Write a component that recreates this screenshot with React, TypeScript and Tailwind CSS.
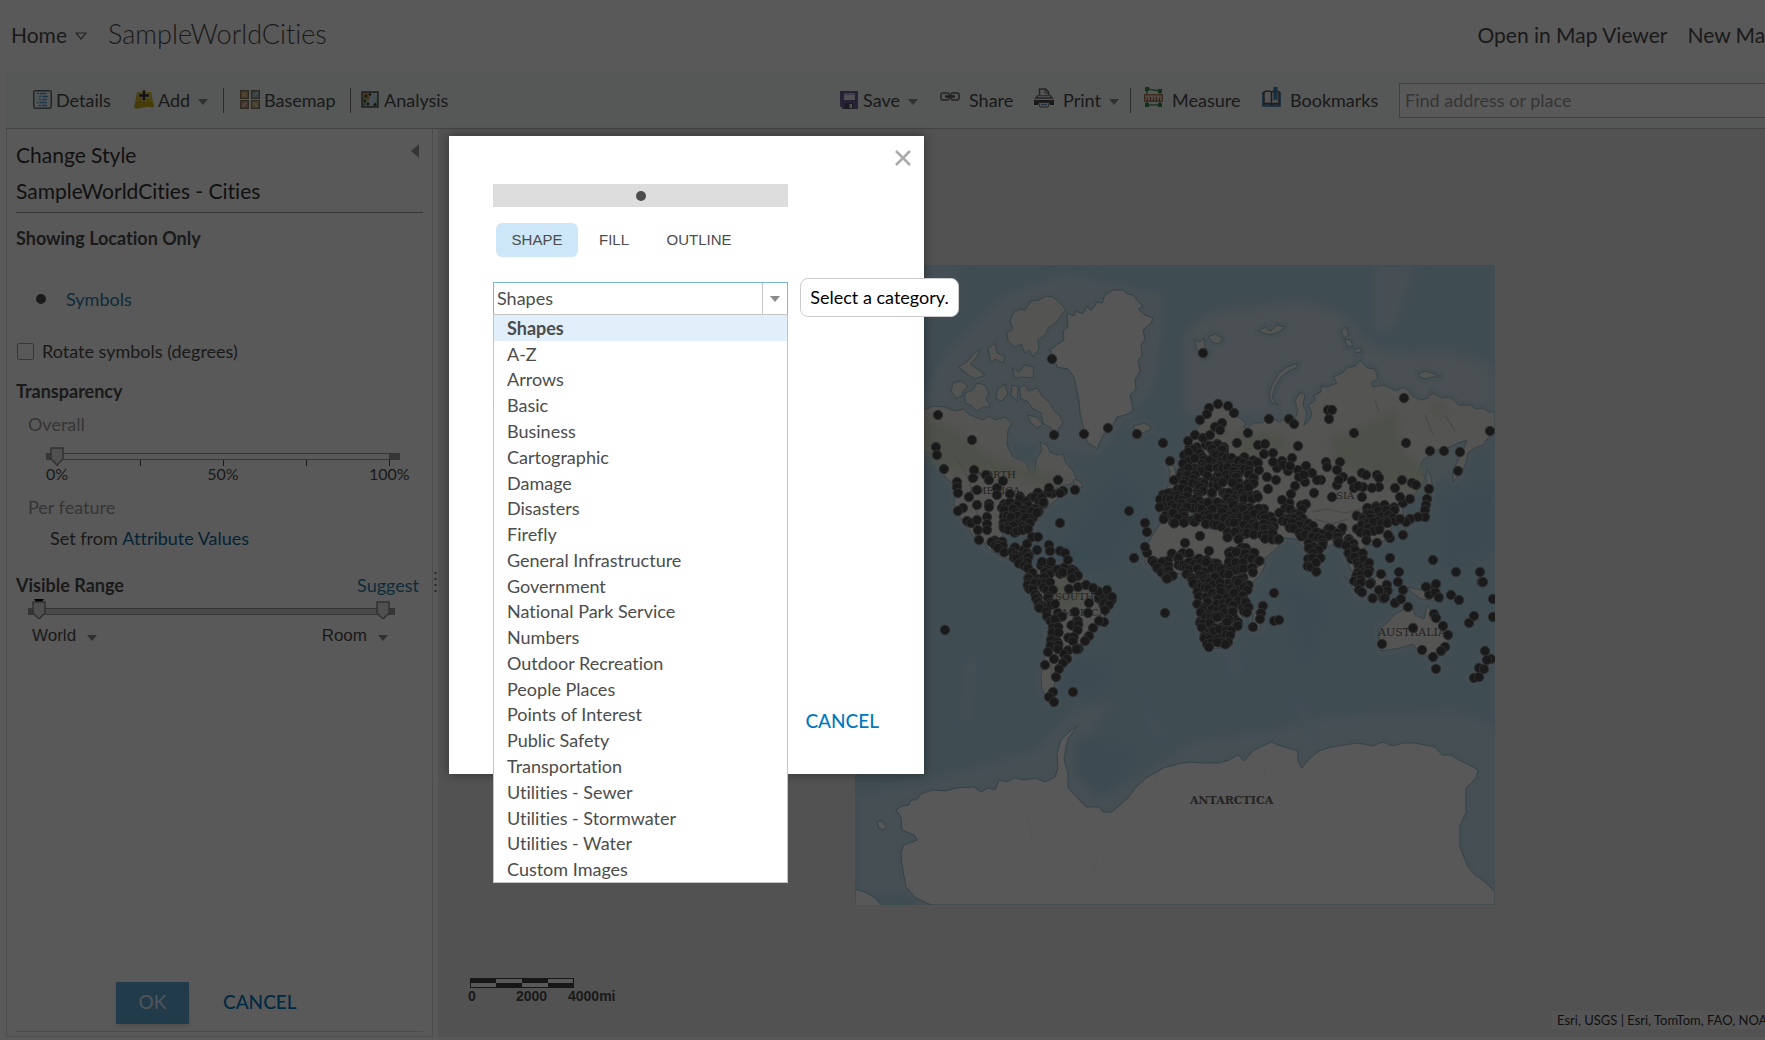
import React from 'react';

type Point = [number, number];

const categories = [
  'Shapes', 'A-Z', 'Arrows', 'Basic', 'Business', 'Cartographic', 'Damage', 'Disasters',
  'Firefly', 'General Infrastructure', 'Government', 'National Park Service', 'Numbers',
  'Outdoor Recreation', 'People Places', 'Points of Interest', 'Public Safety',
  'Transportation', 'Utilities - Sewer', 'Utilities - Stormwater', 'Utilities - Water',
  'Custom Images'
];

// coastlines on the 640 x 640 mercator canvas
const land = {
  northAmerica: '50,145 69,145 78,141 90,142 100,146 108,144 115,150 128,155 134,151 140,155 150,152 157,158 153,165 152,180 158,192 170,197 176,209 180,209 181,195 187,185 185,177 192,180 195,187 202,190 208,189 211,198 218,206 222,214 215,219 203,221 200,224 208,224 213,228 203,233 195,240 188,246 185,253 177,261 178,274 174,268 168,262 160,264 148,266 147,280 154,286 165,281 162,290 172,293 172,303 182,305 180,308 168,303 160,296 148,292 133,284 126,272 118,262 122,276 114,265 112,262 105,252 99,240 100,220 90,212 85,200 78,190 69,186 50,182',
  southAmerica: '182,304 190,298 200,301 212,302 222,309 230,317 232,322 245,325 258,330 257,338 250,345 249,355 246,361 235,366 229,377 217,386 215,393 209,397 205,405 201,413 198,425 200,437 193,434 187,425 186,412 188,400 192,375 195,353 184,340 178,327 177,320 181,312',
  greenland: '195,85 203,79 209,75 208,66 213,62 212,48 219,51 221,46 228,49 232,41 236,46 242,37 247,38 250,30 258,25 268,25 272,29 278,30 288,42 283,44 290,50 298,53 296,58 288,65 290,74 286,80 287,90 283,96 285,106 280,115 281,124 275,130 277,138 278,146 270,150 262,152 258,160 253,165 248,170 245,177 242,184 237,180 233,178 230,170 228,160 225,148 224,135 221,122 219,112 213,104 202,102 199,93',
  ellesmere: '158,48 165,44 170,45 176,36 184,35 191,31 198,32 205,38 211,45 206,50 201,58 194,62 190,70 183,75 184,84 178,92 174,85 170,88 166,79 160,82 153,76 152,68 158,64 155,56',
  devon: '157,103 164,107 170,100 178,102 179,113 168,112 160,113',
  baffin: '164,122 170,120 173,126 182,123 187,131 195,138 199,146 205,151 208,158 204,163 203,169 196,163 188,158 186,148 178,144 172,136 166,134',
  victoria: '110,128 118,125 122,118 130,120 134,128 131,134 136,142 128,142 122,146 116,140 110,138',
  banks: '98,118 106,116 113,121 108,126 107,131 101,133 96,126',
  melville: '104,102 112,97 118,89 126,84 121,93 115,99 122,104 130,110 120,114 112,109',
  bathurst: '133,84 140,78 142,88 150,92 148,98 140,94 136,98',
  prince: '142,125 150,119 153,129 147,136 141,134',
  somerset: '157,120 163,122 162,136 156,130',
  southampton: '172,150 182,152 188,160 182,163 176,158',
  iceland: '278,161 283,160 288,158 294,160 296,164 288,168 281,167',
  newfoundland: '219,214 226,217 228,223 219,221',
  eurasia: '304,235 304,250 310,253 318,250 321,243 335,237 345,245 351,251 353,245 345,233 358,245 361,254 364,240 372,240 367,252 380,255 381,266 390,282 396,297 412,292 425,280 418,273 408,270 405,263 420,272 440,274 449,283 457,305 462,297 463,290 476,280 484,280 490,290 495,303 503,317 500,305 498,297 506,302 513,297 506,285 512,280 525,279 537,268 535,257 530,247 537,243 543,253 549,253 547,241 557,232 566,222 570,212 562,208 568,195 582,185 595,182 603,178 612,175 608,186 603,195 598,207 598,217 605,208 611,198 613,188 620,183 628,180 633,173 640,168 640,147 634,147 628,143 621,144 615,140 604,140 595,132 586,133 578,128 573,133 565,135 557,131 553,125 548,122 541,126 535,123 529,120 518,122 516,118 523,113 520,104 513,103 505,95 500,101 492,103 487,108 478,112 482,118 472,122 466,121 466,127 459,130 460,136 453,140 457,148 455,154 449,161 452,148 448,140 450,130 445,127 440,136 443,146 440,154 433,152 424,157 415,152 407,158 398,158 392,163 388,162 391,158 378,148 365,138 355,142 348,155 342,165 330,178 332,192 338,190 340,200 330,208 320,215 312,222 318,228 317,234',
  britain: '314,218 322,215 320,205 316,192 311,198 315,206',
  novaya: '443,98 437,100 430,103 423,109 418,118 414,128 416,137 423,140 417,133 420,122 426,112 434,106 441,103',
  svalbard: '340,75 345,77 349,73 350,82 354,86 350,95 345,89 341,82',
  svalbardEast: '353,72 360,69 368,73 364,79 357,77',
  franzJosef: '403,66 410,62 416,66 422,60 430,62 424,67 414,70',
  severnaya: '486,66 491,62 494,70 489,73',
  severnayaSouth: '490,74 496,75 498,82 492,81',
  bolshevik: '499,84 505,83 507,87 501,88',
  siberian: '563,109 570,106 577,108 586,112 577,112 570,114 565,112',
  africa: '309,255 338,249 340,258 355,264 375,263 381,265 387,285 397,300 411,299 405,310 392,323 392,347 382,357 380,370 367,383 353,384 346,370 343,350 342,330 336,317 337,312 325,308 305,312 290,298 290,283 302,263',
  madagascar: '407,342 405,365 398,366 398,350',
  australia: '594,369 592,384 580,395 572,391 562,384 558,379 545,383 526,386 524,375 523,364 532,358 540,349 551,343 558,344 560,350 569,354 572,340 576,345 580,355 589,361',
  tasmania: '577,401 584,401 581,407',
  newGuinea: '553,322 565,325 580,328 588,338 578,335 566,334 556,327',
  borneo: '514,318 525,308 532,310 525,326 516,325',
  sumatra: '489,311 498,317 508,331 502,329',
  newZealand: '628,383 640,392 632,400 620,416 614,414 626,401 632,396',
  japan: '550,264 552,255 562,251 568,243 570,233 577,226 574,238 570,250 560,257',
  sakhalin: '572,204 576,212 578,225 573,224 571,214'
};

const antarctica = '41,545 47,541 54,540 56,535 61,535 66,529 78,525 90,526 102,523 119,522 126,527 133,523 140,525 144,515 152,517 160,513 169,515 180,513 190,517 200,512 203,503 202,488 206,475 214,467 223,460 213,474 211,482 209,495 213,508 213,523 231,542 244,542 248,547 257,547 273,533 281,522 291,513 302,507 308,503 327,498 336,497 350,498 364,498 374,495 383,490 389,496 399,485 408,481 416,477 426,481 443,486 443,497 447,503 455,493 464,486 476,482 490,480 501,478 509,479 517,481 528,477 538,481 548,478 559,478 570,480 580,482 587,490 596,490 604,495 614,500 623,505 621,513 611,523 611,548 605,560 605,582 609,592 613,602 620,610 630,617 640,627 640,640 76,640 61,633 51,622 47,600 46,588 49,580 62,575 59,570 47,565 46,552';

const cityGroups: Point[][] = [
  // eastern United States
  [[147, 240], [157, 232], [175, 230], [192, 224], [202, 226], [190, 240], [184, 252], [176, 258], [178, 269], [146, 267]],
  // Mexico and Central America
  [[135, 272], [148, 270], [155, 282], [165, 280], [174, 290], [176, 305], [160, 297], [148, 292], [136, 285]],
  // northern Andes and the Caribbean coast
  [[172, 303], [188, 296], [215, 300], [228, 310], [216, 314], [203, 310], [192, 322], [184, 328], [172, 327]],
  [[174, 318], [195, 312], [198, 325], [200, 338], [208, 350], [205, 385], [193, 385], [193, 352], [182, 344], [174, 332]],
  [[215, 355], [224, 355], [224, 385], [212, 387]],
  [[237, 322], [258, 328], [256, 342], [249, 346]],
  // Europe, Near East
  [[304, 232], [318, 215], [325, 208], [330, 184], [345, 180], [375, 178], [380, 192], [395, 190], [407, 198], [402, 215], [398, 222], [406, 237], [414, 250], [424, 262], [425, 276], [408, 274], [392, 268], [383, 277], [372, 275], [368, 262], [356, 262], [342, 258], [317, 262], [303, 255]],
  // Iran, Pakistan, India
  [[422, 246], [440, 234], [457, 230], [452, 246], [457, 260], [470, 264], [480, 258], [492, 266], [506, 280], [514, 292], [517, 304], [510, 312], [504, 322], [497, 318], [500, 300], [489, 284], [475, 275], [467, 285], [466, 308], [458, 308], [450, 300], [452, 285], [446, 272], [430, 262]],
  // eastern China, Korea
  [[500, 252], [515, 240], [530, 240], [544, 243], [540, 262], [527, 266], [510, 278], [500, 262]],
  // Africa
  [[291, 286], [305, 292], [320, 286], [335, 288], [350, 293], [370, 292], [383, 276], [392, 281], [406, 293], [404, 305], [396, 320], [394, 345], [384, 358], [378, 372], [368, 385], [360, 377], [352, 384], [345, 362], [342, 345], [341, 325], [330, 316], [312, 314], [300, 306]],
  // Indonesia
  [[490, 312], [498, 316], [510, 331], [526, 331], [528, 318], [534, 320], [533, 335], [505, 333]],
  [[568, 322], [588, 325], [588, 338], [576, 338]]
];

const cities: Point[] = [
  [83, 150], [81, 182], [82, 190], [89, 204], [117, 175], [119, 205], [118, 213], [131, 210], [134, 215], [148, 216],
  [102, 217], [102, 222], [103, 228], [114, 232], [122, 225], [122, 240], [108, 243], [103, 246], [134, 239], [134, 242],
  [142, 223], [142, 230], [155, 229], [112, 256], [116, 258], [122, 255], [123, 265], [124, 275], [132, 252], [132, 259],
  [132, 265], [197, 94], [199, 170], [229, 169], [253, 163], [282, 169], [308, 178], [315, 196], [203, 215], [194, 223],
  [220, 225], [208, 226], [205, 228], [205, 258], [274, 246], [290, 258], [292, 267], [290, 282], [279, 293], [177, 272],
  [183, 272], [172, 279], [182, 285], [194, 280], [195, 286], [205, 286], [210, 288], [213, 295], [196, 297], [187, 297],
  [348, 88], [363, 139], [354, 143], [352, 149], [345, 155], [373, 141], [379, 148], [367, 158], [360, 162], [365, 165],
  [393, 168], [382, 178], [414, 154], [434, 154], [439, 159], [473, 145], [477, 145], [474, 154], [499, 168], [443, 181],
  [403, 180], [410, 179], [409, 189], [418, 188], [549, 133], [551, 178], [575, 186], [589, 186], [605, 187], [603, 206],
  [635, 166], [340, 170], [333, 176], [348, 173], [355, 170], [437, 193], [451, 201], [457, 208], [471, 197], [485, 197],
  [472, 202], [482, 205], [488, 212], [466, 215], [462, 215], [450, 217], [440, 221], [436, 229], [482, 220], [484, 215],
  [497, 216], [507, 208], [511, 210], [522, 210], [524, 213], [524, 222], [517, 223], [499, 223], [507, 232], [508, 222],
  [503, 221], [547, 215], [540, 223], [557, 218], [561, 220], [574, 224], [572, 234], [571, 240], [570, 245], [570, 252],
  [563, 252], [555, 254], [551, 257], [545, 254], [477, 232], [459, 228], [548, 238], [555, 234], [545, 232], [548, 270],
  [535, 273], [533, 270], [522, 278], [535, 293], [578, 295], [601, 307], [625, 307], [627, 317], [544, 307], [543, 317],
  [526, 309], [516, 318], [330, 278], [345, 271], [354, 286], [413, 224], [421, 215], [412, 212], [422, 203], [427, 196],
  [433, 206], [443, 205], [418, 197], [444, 212], [449, 210], [428, 200], [435, 201], [427, 235], [419, 328], [408, 341],
  [406, 348], [405, 354], [398, 362], [419, 356], [424, 355], [310, 348], [90, 365], [244, 327], [252, 325], [257, 332],
  [254, 340], [250, 345], [234, 338], [233, 348], [220, 347], [249, 357], [244, 356], [238, 363], [234, 371], [230, 376],
  [209, 389], [212, 394], [208, 398], [204, 404], [201, 412], [198, 427], [194, 432], [199, 437], [218, 427], [193, 387],
  [199, 394], [190, 400], [214, 324], [223, 322], [231, 320], [238, 323], [540, 338], [546, 334], [548, 325], [553, 342],
  [515, 319], [524, 325], [596, 330], [604, 335], [628, 317], [638, 334], [619, 351], [614, 358], [638, 352], [579, 349],
  [581, 353], [588, 361], [593, 370], [590, 382], [586, 386], [578, 392], [581, 404], [567, 385], [527, 379], [558, 363],
  [630, 386], [636, 394], [632, 395], [624, 403], [629, 404], [619, 413], [624, 412], [571, 322], [581, 319]
];

const inside = ([x, y]: Point, ring: Point[]) => {
  let hit = false;
  for (let i = 0, j = ring.length - 1; i < ring.length; j = i++) {
    const [xi, yi] = ring[i];
    const [xj, yj] = ring[j];
    if (yi > y !== yj > y && x < ((xj - xi) * (y - yi)) / (yj - yi) + xi) hit = !hit;
  }
  return hit;
};

// fixed seed, so the scatter is the same on every load
const scatter = (ring: Point[]): Point[] => {
  let seed = 7;
  const random = () => {
    seed = (seed * 16807) % 2147483647;
    return seed / 2147483647;
  };
  const points: Point[] = [];
  for (let y = 170; y < 400; y += 5) {
    for (let x = 130; x < 620; x += 5) {
      const p: Point = [x + random() * 7 - 3, y + random() * 7 - 3];
      if (random() > 0.12 && inside(p, ring)) points.push(p);
    }
  }
  return points;
};

const allCities = [...cityGroups.flatMap(scatter), ...cities];

const Caret: React.FC<{ className?: string }> = ({ className = '' }) => (
  <svg className={`shrink-0 ${className}`} width="10" height="6" viewBox="0 0 10 6" aria-hidden="true">
    <path d="M0 0h10L5 6z" fill="#8a8a8a" />
  </svg>
);

const DetailsIcon = () => (
  <svg width="19" height="19" viewBox="0 0 19 19" aria-hidden="true">
    <rect x="0.75" y="0.75" width="17.5" height="17.5" rx="1.5" fill="#eef5fa" stroke="#6c6c6c" strokeWidth="1.5" />
    <path d="M4 3.500h2M7 3.500h6M6 6.500h2M9 6.500h6M6 9.500h2M9 9.500h5M4 12.500h2M7 12.500h7M6 15.500h2M9 15.500h5" stroke="#5b9bc8" strokeWidth="1.3" />
  </svg>
);

const AddIcon = () => (
  <svg width="20" height="19" viewBox="0 0 20 19" aria-hidden="true">
    <path d="M3 2h14l3 15c-3 1-5-1-9 0s-7 2-11 1z" fill="#d6b92c" />
    <path d="M2 12c5-3 11 3 17-1l1 6c-3 1-5-1-9 0s-7 2-11 1z" fill="#c9aa1c" />
    <path d="M10 0v11M4.500 5.500h11" stroke="#e8dfae" strokeWidth="4" />
    <path d="M10 0.500v10M5 5.500h10" stroke="#333" strokeWidth="2.500" />
  </svg>
);

const BasemapIcon = () => (
  <svg width="20" height="19" viewBox="0 0 20 19" aria-hidden="true">
    <g stroke="#7c7058" strokeWidth="1.300">
      <rect x="0.700" y="0.700" width="7.600" height="7.600" fill="#d9c083" />
      <rect x="11.700" y="0.700" width="7.600" height="7.600" fill="#9fc0c4" />
      <rect x="0.700" y="10.700" width="7.600" height="7.600" fill="#d8a283" />
      <rect x="11.700" y="10.700" width="7.600" height="7.600" fill="#d7c28a" />
    </g>
    <path d="M13 7l5-5M2 17l5-5M13 12l5 5M2 3l3 3" stroke="#eee" />
  </svg>
);

const AnalysisIcon = () => (
  <svg width="18" height="17" viewBox="0 0 18 17" aria-hidden="true">
    <rect x="1" y="1" width="16" height="15" fill="#a8d0c4" stroke="#5c5c5c" strokeWidth="1.600" />
    <path d="M2 2h8L8 8l-6 3z" fill="#d89a4e" />
    <path d="M2 6c4-1 4 4 2 9H2z" fill="#86a870" />
    <path d="M10 2l-3 13h5l4-9V2z" fill="#cfe3f0" />
    <g fill="#2d4b33">
      <circle cx="5" cy="5" r="1.500" />
      <circle cx="9" cy="3.500" r="1.200" />
      <circle cx="4" cy="10" r="1.200" />
      <circle cx="7" cy="13" r="1.400" />
      <circle cx="14" cy="13.500" r="1.500" />
    </g>
  </svg>
);

const SaveIcon = () => (
  <svg width="18" height="18" viewBox="0 0 18 18" aria-hidden="true">
    <path d="M0 0h18v18H3l-3-3z" fill="#6d5e94" />
    <path d="M4 2h11v7H4z" fill="#e9e6f2" />
    <path d="M4 2h11v2H4z" fill="#b9b2d0" />
    <path d="M5 12h8v6H5z" fill="#4a4a4a" />
    <path d="M9.500 13h2.500v4H9.500z" fill="#eee" />
  </svg>
);

const ShareIcon = () => (
  <svg className="mb-1.5" width="20" height="9" viewBox="0 0 20 9" fill="none" aria-hidden="true">
    <rect x="1" y="1" width="8" height="7" rx="2" stroke="#888" strokeWidth="2" />
    <rect x="11" y="1" width="8" height="7" rx="2" stroke="#888" strokeWidth="2" />
    <path d="M5 4.500h10" stroke="#5c5c5c" strokeWidth="2.500" />
  </svg>
);

const PrintIcon = () => (
  <svg className="mb-1" width="20" height="20" viewBox="0 0 20 20" aria-hidden="true">
    <path d="M5.500 7V1h6l3 3v3" fill="#f4f4f4" stroke="#666" strokeWidth="1.500" />
    <path d="M11 1v4h4" fill="none" stroke="#666" />
    <path d="M3 7h14l3 4H0z" fill="#888" />
    <path d="M4 8.500h12" stroke="#ddd" />
    <path d="M0 12h20v5h-4l-1-2H5l-1 2H0z" fill="#4c4c4c" />
    <path d="M4.500 14.500h11l-1.500 4.500H6z" fill="#f4f4f4" stroke="#666" />
    <path d="M7 16.500h6" stroke="#5b9bc8" strokeWidth="1.400" />
  </svg>
);

const MeasureIcon = () => (
  <svg className="mb-1.5" width="19" height="20" viewBox="0 0 19 20" aria-hidden="true">
    <path d="M3 2l13 2M3 2v5M16 4v3M3 13v5h13v-5" fill="none" stroke="#5c9468" strokeWidth="1.500" />
    <g fill="#3d8a4c">
      <rect x="1" y="0" width="4" height="4" />
      <rect x="14" y="2" width="4" height="4" />
      <rect x="1" y="16" width="4" height="4" />
      <rect x="14" y="16" width="4" height="4" />
    </g>
    <rect x="0.700" y="7.700" width="17.600" height="6.600" fill="#e6cdbb" stroke="#b07a55" strokeWidth="1.400" />
    <path d="M3.500 14v-3M6.500 14v-4M9.500 14v-3M12.500 14v-4M15.500 14v-3" stroke="#8a5f42" />
  </svg>
);

const BookmarkIcon = () => (
  <svg className="mb-1.5" width="19" height="20" viewBox="0 0 19 20" aria-hidden="true">
    <path d="M0 5h19v15H0z" fill="#5f93b4" />
    <path d="M2 17V5c3-1.500 6-1 7.500 0C11 4 14 3.500 17 5v12c-3-1-6-1-7.500 1C8 16 5 16 2 17z" fill="#f2f2f2" stroke="#555" strokeWidth="1.500" />
    <path d="M9.500 5v12" stroke="#555" strokeWidth="1.500" />
    <path d="M11.500 0h4v14l-2-2-2 2z" fill="#3a84b4" />
  </svg>
);

type ToolProps = { label: string; icon: React.ReactNode; width: string; gap: string; menu?: boolean };

const Tool: React.FC<ToolProps> = ({ label, icon, width, gap, menu }) => (
  <button type="button" className={`flex shrink-0 items-center whitespace-nowrap pb-0.5 ${gap} ${width}`}>
    {icon}
    <span className="flex items-center gap-2">
      {label}
      {menu && <Caret className="mt-1" />}
    </span>
  </button>
);

const Thumb: React.FC<{ x: number; y: number }> = ({ x, y }) => (
  <path
    d={`M${x - 6} ${y}h12v11l-6 6-6-6z`}
    fill="#e4e4e4"
    stroke="#8c8c8c"
    strokeWidth="1.500"
  />
);

const WorldMap = () => (
  <svg className="block size-[640px] shrink-0" viewBox="0 0 640 640" role="img" aria-label="World cities">
    <defs>
      <filter id="soft"><feGaussianBlur stdDeviation="5" /></filter>
    </defs>
    <rect width="640" height="640" fill="#b4d9ec" />
    <g filter="url(#soft)">
      <path d="M330 70c20-30 50-25 80-30 40-8 70 0 90 20 10 30 50 30 90 25l50 15v50H330z" fill="#d3e4ee" />
      <path d="M60 150l30-60 60-60 60-20 100 20-10 90-60 70-120-20z" fill="#cbe3f0" />
      <path d="M20 0h90L60 60z" fill="#c6e2f1" />
      <path d="M520 0h40l-20 60-20 10z" fill="#cbe3f0" />
      <path d="M0 530l70-15 110-30 40-40 40-10-40 60 20 40 40-20 60-40 80-10 60-15 120-5 60 20 20 165H0z" fill="#c6e1f0" />
      <path d="M110 390l14 5-8 60-12 10zM285 405l10 40 20 30-20-5zM435 430l15 10 15 40-12-5zM370 370l20 30-15 20z" fill="#bfe0f1" />
      <path d="M572 185l30-5-4 30-22 10z" fill="#cfe2ea" />
      <path d="M205 300c10-30 40-60 60-90l20 30-30 60zM430 320l40 20-20 60zM215 395l40 8-15 25-35-5z" fill="#aad3e9" />
      <path d="M220 470l60 20-30 40-30-20zM590 240l50-20v60l-50 20z" fill="#aad3e9" />
    </g>
    <g fill="#f1eeec" stroke="#c9dfe9" strokeWidth="9" strokeLinejoin="round" opacity="0.6">
      {Object.entries(land).map(([name, points]) => <polygon key={name} points={points} />)}
      <polygon points={antarctica} />
    </g>
    <g fill="#f1efed" stroke="#90bdd0" strokeLinejoin="round">
      {Object.entries(land).map(([name, points]) => <polygon key={name} points={points} />)}
      <polygon points={antarctica} fill="#fcfcfc" />
      <polygon points={land.greenland} fill="#f7f6f5" />
      <path d="M0 624l10 3 10 6 7 8H0zM22 557l5-1 4 6-2 3-5-2z" fill="#fcfcfc" />
    </g>
    <g filter="url(#soft)" fill="#dde7d0">
      <path d="M70 150l30 15 30 25 50 15 35 10-15 8-50-12-40-5-30-5-15-25z" />
      <path d="M380 165l50 5 5 18-55 2zM475 170l15 0 50-25 5 40 25 20-5 25-40-15-45-15zM340 165l25-8 10 15-35 20z" />
      <path d="M185 320l40-5 5 25-30 5zM335 310l40 0v25l-30-5zM575 142l12-4 6 8-14 6z" />
    </g>
    <path d="M458 247l14-3 18 4 16-4M460 254l18 5 14-5M100 190l14 25 5 25 12 30M190 330l8 30-2 50M570 150l8 20M590 150l10 16M520 135l4 12" fill="none" stroke="#d8d2cc" strokeWidth="1.500" />
    <path d="M172 547l5 28M238 610l4-16M300 510l2 10M409 503l2 8" fill="none" stroke="#f0f0f0" />
    <g className="font-['DejaVu_Serif',serif] text-[10px]" fill="#6a6462">
      <text x="121" y="213">NORTH</text>
      <text x="114" y="229">AMERICA</text>
      <text x="200" y="335">SOUTH</text>
      <text x="200" y="351">AMERICA</text>
      <text x="474" y="234">ASIA</text>
      <text x="523" y="371" className="text-[11px]">AUSTRALIA</text>
      <text x="335" y="539" className="text-[11px] font-bold">ANTARCTICA</text>
    </g>
    <g fill="#4c4c4c" stroke="#828282">
      {allCities.map(([x, y], i) => <circle key={i} cx={x} cy={y} r="4.700" />)}
    </g>
  </svg>
);

const Sidebar = () => (
  <aside className="flex w-[427px] shrink-0 flex-col border-x border-b border-[#dcdcdc] px-[9px] text-lg text-[#4c4c4c]">
    <div className="mt-2 flex h-9 items-center justify-between text-[21px] text-[#333]">
      <h2>Change Style</h2>
      <button type="button" aria-label="Collapse panel" className="mb-2 mr-1">
        <svg width="8" height="14" viewBox="0 0 8 14"><path d="M8 0v14L0 7z" fill="#9a9a9a" /></svg>
      </button>
    </div>
    <h3 className="flex h-10 items-center border-b border-[#a0a0a0] pb-0.5 text-[21px] text-[#333]">SampleWorldCities - Cities</h3>
    <h4 className="mt-2 flex h-9 items-center pb-0.5 font-bold">Showing Location Only</h4>
    <div className="mt-6 flex h-9 items-center gap-5 pl-5">
      <span className="size-[10px] rounded-full bg-[#4c4c4c]"></span>
      <a href="#symbols" className="text-[#2f7ea8]">Symbols</a>
    </div>
    <label className="mt-4 flex h-9 items-center gap-2 pl-px">
      <input type="checkbox" className="size-[17px] appearance-none rounded-xs border border-[#a0a0a0]" />
      Rotate symbols (degrees)
    </label>
    <h4 className="mt-1 flex h-9 items-center font-bold">Transparency</h4>
    <label htmlFor="overall" className="flex h-8 items-center pb-0.5 pl-3 text-[#999]">Overall</label>
    <div className="relative mt-1 w-[407px]">
      <svg className="block" width="407" height="22" viewBox="0 0 407 22" aria-hidden="true">
        <path d="M30 8h6v7h-6zM373 8h11v7h-11z" fill="#9a9a9a" />
        <path d="M36 8.500h337M36 14.500h337" stroke="#9a9a9a" />
        <path d="M41.500 15v6M124.500 15v6M207.500 15v6M290.500 15v6M373.500 15v6" stroke="#4c4c4c" />
        <Thumb x={41} y={3} />
      </svg>
      <input id="overall" type="range" min="0" max="100" defaultValue="0" className="absolute inset-0 w-full opacity-0" />
    </div>
    <div className="flex h-4 w-[393px] items-center justify-between pb-0.5 pl-[21px] text-center text-base">
      <span className="w-10">0%</span>
      <span className="w-10">50%</span>
      <span className="w-10">100%</span>
    </div>
    <p className="mt-2 flex h-8 items-center pl-3 text-[#999]">Per feature</p>
    <p className="flex h-8 items-center whitespace-pre pb-0.5 pl-[34px]">Set from <a href="#attributes" className="text-[#0e6698]">Attribute Values</a></p>
    <div className="mt-4 flex h-7 items-center justify-between pr-1">
      <h4 className="font-bold">Visible Range</h4>
      <a href="#suggest" className="text-[#2f7ea8]">Suggest</a>
    </div>
    <div className="relative w-[407px]">
      <svg className="block" width="407" height="20" viewBox="0 0 407 20" aria-hidden="true">
        <path d="M12 9h9v7h-9zM370 9h9v7h-9z" fill="#9a9a9a" />
        <path d="M21 9.500h349v6H21z" fill="#d5d5d5" stroke="#9a9a9a" />
        <path d="M18 0h10l-2 3h-6z" fill="#000" />
        <Thumb x={23} y={3} />
        <Thumb x={367} y={3} />
      </svg>
      <input aria-label="Visible range" type="range" className="absolute inset-0 w-full opacity-0" />
    </div>
    <div className="flex h-[34px] items-center justify-between pl-4 pr-[35px] font-['Liberation_Sans',sans-serif] text-[17px]">
      <button type="button" className="flex items-center gap-[11px]">World <Caret className="mt-1" /></button>
      <button type="button" className="flex items-center gap-[11px]">Room <Caret className="mt-1" /></button>
    </div>
    <div className="mt-auto flex h-[42px] items-center gap-[34px] pl-[100px] text-[19px]">
      <button type="button" className="h-[42px] w-[73px] bg-[#5fa8d3] pb-0.5 text-[#e8f4fb] shadow-md">OK</button>
      <button type="button" className="pb-0.5 font-medium text-[#0079c1]">CANCEL</button>
    </div>
    <div className="mt-[7px] h-[5px] border-t border-[#d8d8d8]"></div>
  </aside>
);

const SymbolDialog = () => (
  <div role="dialog" aria-label="Change symbol" className="absolute left-[449px] top-[136px] flex h-[638px] w-[475px] flex-col bg-white pl-11 pt-12 text-lg text-[#4c4c4c] shadow-[0_0_10px_rgba(0,0,0,0.4)]">
    <button type="button" aria-label="Close" className="absolute right-[13px] top-[14px]">
      <svg width="16" height="16" viewBox="0 0 16 16" fill="none">
        <path d="M1 1l14 14M15 1L1 15" stroke="#ababab" strokeWidth="2.500" />
      </svg>
    </button>
    <div className="flex h-[23px] w-[295px] items-center justify-center bg-[#ddd]">
      <span className="size-[10px] rounded-full bg-[#4c4c4c]"></span>
    </div>
    <div className="ml-[3px] mt-4 flex h-[34px] items-center font-['Liberation_Sans',sans-serif] text-[15px]">
      <button type="button" className="h-full w-[82px] rounded-md bg-[#cde6f8]">SHAPE</button>
      <button type="button" className="h-full w-[72px]">FILL</button>
      <button type="button" className="h-full w-[98px]">OUTLINE</button>
    </div>
    <div className="relative mt-[25px] h-[34px] w-[295px]">
      <select aria-label="Category" className="h-full w-full appearance-none border border-[#76b6dd] border-b-[#c4c4c4] bg-white pb-0.5 pl-[3px]">
        {categories.map((name) => <option key={name}>{name}</option>)}
      </select>
      <span className="pointer-events-none absolute right-px top-px flex h-8 w-[25px] items-center justify-center border-l border-[#c4c4c4]">
        <Caret />
      </span>
      <ul role="listbox" aria-label="Categories" className="absolute left-0 top-8 grid h-[569px] w-[295px] auto-rows-fr border border-[#c4c4c4] bg-white">
        {categories.map((name, i) => (
          <li
            key={name}
            role="option"
            aria-selected={i === 0}
            className={`flex items-center pl-[13px] leading-6 ${i === 0 ? 'bg-[#e1effb] font-bold' : ''}`}
          >
            {name}
          </li>
        ))}
      </ul>
      <div role="tooltip" className="absolute -top-1 left-[307px] flex h-[39px] w-[159px] items-center justify-center whitespace-nowrap rounded-lg border border-[#ccc] bg-white pb-0.5 text-black">
        Select a category.
      </div>
    </div>
    <button type="button" className="mb-[38px] mr-[45px] mt-auto self-end text-[19px] font-medium text-[#0079c1]">CANCEL</button>
  </div>
);

const App: React.FC = () => {
  return (
    <div className="relative flex h-screen flex-col overflow-hidden bg-white font-[Lato,sans-serif] text-lg text-[#4c4c4c] [font-variant-ligatures:none]">
      <header className="flex h-[73px] shrink-0 items-center pl-[11px]">
        <button type="button" className="flex w-[97px] shrink-0 items-center gap-2 pb-0.5 text-[21px]">
          Home
          <svg width="12" height="8" viewBox="0 0 12 8" aria-hidden="true">
            <path d="M1 1h10L6 7z" fill="none" stroke="#666" strokeWidth="1.200" />
          </svg>
        </button>
        <h1 className="pb-1.5 text-[27px] font-light">SampleWorldCities</h1>
        <nav className="-mr-3 ml-auto flex gap-5 whitespace-nowrap pb-0.5 text-[21px]">
          <a href="#viewer">Open in Map Viewer</a>
          <a href="#new">New Map</a>
        </nav>
      </header>

      <div className="ml-1.5 flex h-14 shrink-0 items-center border-b border-[#c0c0c0] bg-[#f5fbf8] pl-[27px]">
        <Tool label="Details" icon={<DetailsIcon />} gap="gap-1" width="w-[101px]" />
        <Tool label="Add" icon={<AddIcon />} gap="gap-1" width="w-[89px]" menu />
        <span className="h-[25px] w-[17px] shrink-0 border-l border-[#777]"></span>
        <Tool label="Basemap" icon={<BasemapIcon />} gap="gap-1" width="w-[110px]" />
        <span className="h-[25px] w-[11px] shrink-0 border-l border-[#777]"></span>
        <Tool label="Analysis" icon={<AnalysisIcon />} gap="gap-[5px]" width="w-[100px]" />
        <div className="ml-auto flex shrink-0 items-center">
          <Tool label="Save" icon={<SaveIcon />} gap="gap-[5px]" width="w-[100px]" menu />
          <Tool label="Share" icon={<ShareIcon />} gap="gap-[9px]" width="w-[94px]" />
          <Tool label="Print" icon={<PrintIcon />} gap="gap-[9px]" width="w-[96px]" menu />
          <span className="h-[25px] w-[14px] shrink-0 border-l border-[#777]"></span>
          <Tool label="Measure" icon={<MeasureIcon />} gap="gap-[9px]" width="w-[118px]" />
          <Tool label="Bookmarks" icon={<BookmarkIcon />} gap="gap-[9px]" width="w-[137px]" />
          <input
            type="text"
            aria-label="Find address or place"
            placeholder="Find address or place"
            className="h-[35px] w-[366px] border border-r-0 border-[#bbb] bg-white pb-0.5 pl-[5px] placeholder:text-[#999]"
          />
        </div>
      </div>

      <main className="mb-[3px] ml-1.5 flex min-h-0 flex-1">
        <Sidebar />
        <div className="flex w-[5px] shrink-0 items-center justify-center">
          <svg width="3" height="22" viewBox="0 0 3 22" aria-hidden="true">
            <path d="M1.500 0v22" stroke="#777" strokeWidth="2" strokeDasharray="2 4" />
          </svg>
        </div>
        <section className="relative min-w-0 flex-1 overflow-hidden bg-[#ebebeb] pl-[417px] pt-[136px]">
          <WorldMap />
          <div className="absolute bottom-[33px] left-[26px] w-[160px] font-['Liberation_Sans',sans-serif] text-sm font-bold leading-4">
            <svg className="ml-1.5 block" width="104" height="10" viewBox="0 0 104 10" aria-hidden="true">
              <rect width="104" height="10" fill="#444" />
              <path d="M26 1h26v4H26zM78 1h25v4H78zM1 5h25v4H1zM52 5h26v4H52z" fill="#fff" />
            </svg>
            <div className="flex">
              <span className="w-[52px] pl-1">0</span>
              <span className="w-[52px]">2000</span>
              <span>4000mi</span>
            </div>
          </div>
          <div className="absolute bottom-2 right-0 w-[213px] overflow-hidden whitespace-nowrap bg-[#f3f3f3] pl-[5px] text-[13px] leading-[18px] text-[#333]">
            Esri, USGS | Esri, TomTom, FAO, NOAA
          </div>
        </section>
      </main>

      <div className="absolute inset-0 bg-black/65"></div>
      <SymbolDialog />
    </div>
  );
};

export default App;
